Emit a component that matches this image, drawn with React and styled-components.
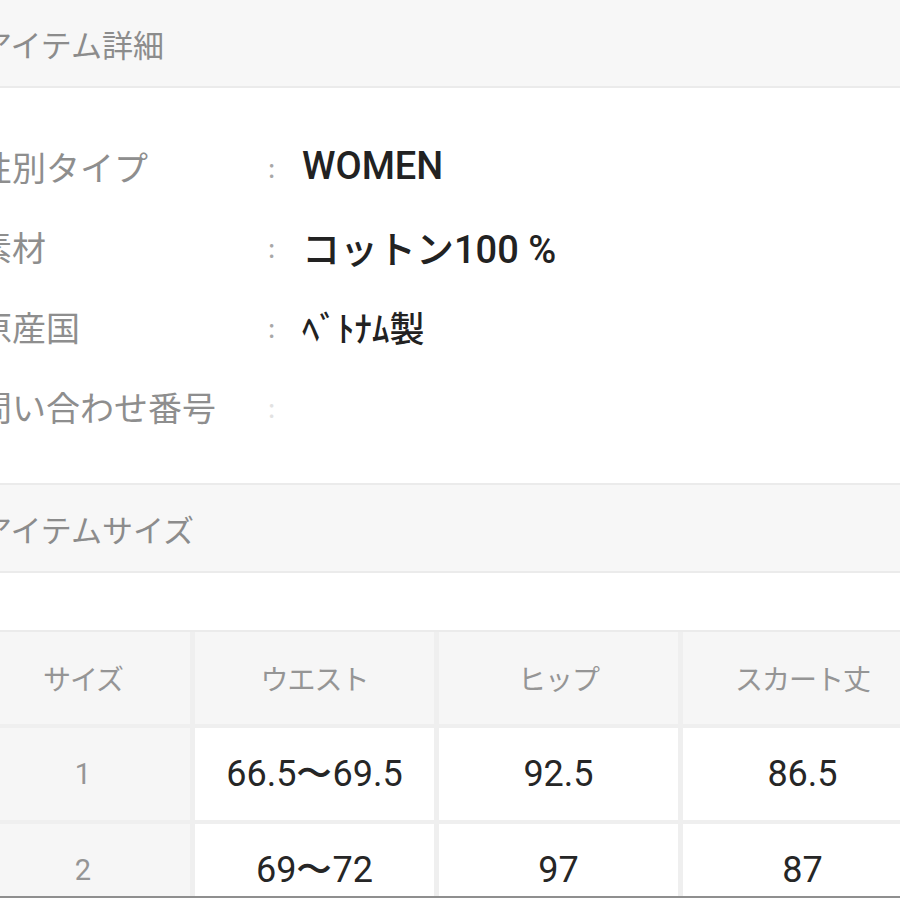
import React from 'react'
import styled, { createGlobalStyle } from 'styled-components'

const GlobalStyle = createGlobalStyle`
    html, body {
        margin: 0;
        padding: 0;
        background: #ffffff;
    }
    body {
        width: 900px;
        height: 900px;
        overflow: hidden;
        font-family: "Noto Sans CJK JP", "Noto Sans", sans-serif;
    }
`

const Page = styled.div`
    width: 900px;
    display: flex;
    flex-direction: column;
    overflow: hidden;
`, SectionHead = styled.div`
    height: 86px;
    display: flex;
    align-items: center;
    background: #f7f7f7;
    border-top: ${props => props.topLine ? '2px solid #ebebeb' : 'none'};
    border-bottom: 2px solid #ebebeb;
    overflow: hidden;
`, HeadTitle = styled.span`
    margin-left: -19px;
    font-size: 31px;
    color: #8c8c8c;
    white-space: nowrap;
`, Details = styled.div`
    padding: 38px 0 37px;
    display: flex;
    flex-direction: column;
    overflow: hidden;
`, Row = styled.div`
    height: 80px;
    display: grid;
    grid-template-columns: 290px 34px 1fr;
    align-items: center;
    margin-left: -22px;
`, Label = styled.div`
    font-size: 34px;
    color: #8e8e8e;
    white-space: nowrap;
`, Colon = styled.div`
    font-size: 26px;
    color: ${props => props.faint ? '#e2e2e2' : '#a8a8a8'};
`, Value = styled.div`
    font-family: Roboto, "Noto Sans CJK JP", sans-serif;
    font-size: ${props => props.narrow ? '35px' : '38px'};
    font-weight: 500;
    color: #222222;
    white-space: nowrap;
`, Spacer = styled.div`
    height: 57px;
`, Table = styled.div`
    display: grid;
    grid-template-columns: 214px 239px 239px 239px;
    grid-auto-rows: 92px;
    gap: 4px 5px;
    margin-left: -24px;
    background: #efefef;
    border-top: 2px solid #ebebeb;
    height: 264px;
    overflow: hidden;
    border-bottom: 2px solid #8f8f8f;
`, Cell = styled.div`
    display: flex;
    align-items: center;
    justify-content: center;
    background: ${props => props.head || props.index ? '#f6f6f6' : '#ffffff'};
    color: ${props => props.head || props.index ? '#959595' : '#262626'};
    font-family: ${props => props.head ? '"Noto Sans CJK JP", sans-serif' : 'Roboto, "Noto Sans", sans-serif'};
    font-size: ${props => props.head ? '28px' : props.index ? '29px' : '36px'};
    letter-spacing: ${props => props.head ? '-1px' : '0'};
    white-space: nowrap;
`

const details = [
    { label: '性別タイプ', value: 'WOMEN' },
    { label: '素材', value: 'コットン100 %' },
    { label: '原産国', value: 'ﾍﾞﾄﾅﾑ製', narrow: true },
    { label: '問い合わせ番号', value: '', faint: true },
]

const columns = ['サイズ', 'ウエスト', 'ヒップ', 'スカート丈']

const sizes = [
    ['1', '66.5〜69.5', '92.5', '86.5'],
    ['2', '69〜72', '97', '87'],
]

export default function App() {
    return (
        <Page>
            <GlobalStyle />
            <SectionHead>
                <HeadTitle>アイテム詳細</HeadTitle>
            </SectionHead>
            <Details>
                {details.map(d => (
                    <Row key={d.label}>
                        <Label>{d.label}</Label>
                        <Colon faint={d.faint}>:</Colon>
                        <Value narrow={d.narrow}>{d.value}</Value>
                    </Row>
                ))}
            </Details>
            <SectionHead topLine>
                <HeadTitle>アイテムサイズ</HeadTitle>
            </SectionHead>
            <Spacer />
            <Table>
                {columns.map(c => <Cell head key={c}>{c}</Cell>)}
                {sizes.map(row => row.map((v, i) => (
                    <Cell index={i === 0} key={row[0] + '-' + i}>{v}</Cell>
                )))}
            </Table>
        </Page>
    )
}
